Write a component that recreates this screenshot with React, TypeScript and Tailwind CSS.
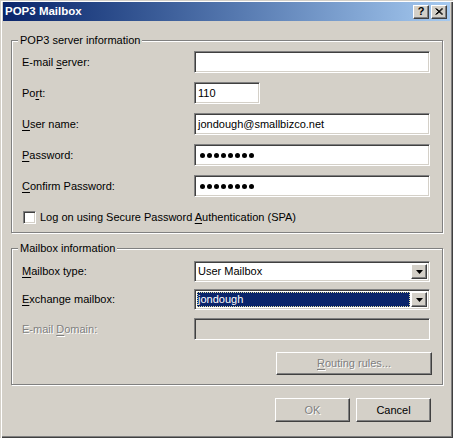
import React from "react";

const sunken =
  "border border-t-[#808080] border-l-[#808080] border-r-white border-b-white shadow-[inset_1px_1px_0_#404040,inset_-1px_-1px_0_#d4d0c8]";
const raised =
  "border border-t-white border-l-white border-r-[#404040] border-b-[#404040] shadow-[inset_-1px_-1px_0_#808080,inset_1px_1px_0_#d4d0c8]";
const disabledText = "text-[#808080] [text-shadow:1px_1px_0_#fff]";

function U({ children }: { children: React.ReactNode }) {
  return <span className="underline decoration-1 underline-offset-[2px]">{children}</span>;
}

function Dots() {
  return (
    <div className="flex items-center gap-[2px] pl-[5px]">
      {Array.from({ length: 8 }).map((_, i) => (
        <div key={i} className="w-[5px] h-[5px] rounded-full bg-black" />
      ))}
    </div>
  );
}

function Row({
  label,
  children,
  mt,
}: {
  label: React.ReactNode;
  children: React.ReactNode;
  mt: string;
}) {
  return (
    <div className={`flex items-center ${mt}`}>
      <div className="w-[182px] pl-[10px]">{label}</div>
      {children}
    </div>
  );
}

function Arrow() {
  return (
    <div className={`w-[16px] h-full flex items-center justify-center bg-[#d4d0c8] ${raised}`}>
      <svg width="7" height="4" viewBox="0 0 7 4">
        <path d="M0 0H7L3.5 4Z" fill="#000" />
      </svg>
    </div>
  );
}

export default function App() {
  return (
    <div className="w-[453px] h-[438px] bg-[#d4d0c8] flex flex-col px-[3px] pt-[2px] pb-[3px] text-[11px] leading-[13px] text-black [font-family:'Liberation_Sans',Arial,sans-serif] shadow-[inset_1px_1px_0_#d4d0c8,inset_2px_2px_0_#fff,inset_-1px_-1px_0_#404040,inset_-2px_-2px_0_#808080]">
      {/* Title bar */}
      <div className="h-[19px] flex items-center bg-gradient-to-r from-[#0a246a] to-[#a6caf0] pl-[2px] pr-[3px]">
        <div className="flex-1 text-white font-bold text-[11.5px]">POP3 Mailbox</div>
        <div className={`w-[16px] h-[14px] bg-[#d4d0c8] flex items-center justify-center ${raised}`}>
          <span className="font-bold text-[11px] leading-[11px] text-black">?</span>
        </div>
        <div className={`ml-[2px] w-[16px] h-[14px] bg-[#d4d0c8] flex items-center justify-center ${raised}`}>
          <svg width="8" height="7" viewBox="0 0 8 7">
            <path d="M0.5 0.5L7 6.5M1.5 0.5L8 6.5M7 0.5L0.5 6.5M8 0.5L1.5 6.5" stroke="#000" strokeWidth="1" />
          </svg>
        </div>
      </div>

      {/* Group 1 */}
      <div className="relative ml-[8px] mt-[19px] w-[432px] h-[193px] border border-[#808080] shadow-[inset_1px_1px_0_#fff,1px_1px_0_#fff] pt-[10px]">
        <div className="absolute -top-[7px] left-[6px] px-[2px] bg-[#d4d0c8]">POP3 server information</div>
        <Row mt="" label={<>E-mail <U>s</U>erver:</>}>
          <div className={`w-[236px] h-[22px] bg-white ${sunken}`} />
        </Row>
        <Row mt="mt-[9px]" label={<>Po<U>r</U>t:</>}>
          <div className={`w-[66px] h-[22px] bg-white flex items-center pl-[3px] ${sunken}`}>110</div>
        </Row>
        <Row mt="mt-[9px]" label={<><U>U</U>ser name:</>}>
          <div className={`w-[236px] h-[22px] bg-white flex items-center pl-[3px] ${sunken}`}>jondough@smallbizco.net</div>
        </Row>
        <Row mt="mt-[9px]" label={<><U>P</U>assword:</>}>
          <div className={`w-[236px] h-[22px] bg-white flex items-center ${sunken}`}>
            <Dots />
          </div>
        </Row>
        <Row mt="mt-[9px]" label={<><U>C</U>onfirm Password:</>}>
          <div className={`w-[236px] h-[22px] bg-white flex items-center ${sunken}`}>
            <Dots />
          </div>
        </Row>
        <div className="flex items-center mt-[14px] pl-[11px]">
          <div className={`w-[13px] h-[13px] bg-white ${sunken}`} />
          <div className="ml-[4px]">Log on using Secure Password <U>A</U>uthentication (SPA)</div>
        </div>
      </div>

      {/* Group 2 */}
      <div className="relative ml-[8px] mt-[15px] w-[432px] h-[137px] border border-[#808080] shadow-[inset_1px_1px_0_#fff,1px_1px_0_#fff] pt-[12px]">
        <div className="absolute -top-[7px] left-[6px] px-[2px] bg-[#d4d0c8]">Mailbox information</div>
        <Row mt="" label={<><U>M</U>ailbox type:</>}>
          <div className={`w-[236px] h-[21px] bg-white flex items-center p-[2px] ${sunken}`}>
            <div className="flex-1 pl-[1px]">User Mailbox</div>
            <Arrow />
          </div>
        </Row>
        <Row mt="mt-[7px]" label={<><U>E</U>xchange mailbox:</>}>
          <div className={`w-[236px] h-[21px] bg-white flex items-center p-[2px] ${sunken}`}>
            <div className="flex-1 h-full mr-[1px] bg-[#0a246a] text-white flex items-center pl-[1px] outline-1 outline-dotted outline-[#e0dca0] -outline-offset-1">
              jondough
            </div>
            <Arrow />
          </div>
        </Row>
        <Row mt="mt-[8px]" label={<span className={disabledText}>E-mail <U>D</U>omain:</span>}>
          <div className={`w-[236px] h-[22px] bg-[#d4d0c8] ${sunken}`} />
        </Row>
        <div className="flex justify-end mt-[12px] pr-[10px]">
          <div className={`w-[156px] h-[23px] bg-[#d4d0c8] flex items-center justify-center ${raised} ${disabledText}`}>
            <span><U>R</U>outing rules...</span>
          </div>
        </div>
      </div>

      {/* Buttons */}
      <div className="flex justify-end mt-[13px] pr-[19px] gap-[6px]">
        <div className={`w-[75px] h-[24px] bg-[#d4d0c8] flex items-center justify-center ${raised} ${disabledText}`}>OK</div>
        <div className={`w-[75px] h-[24px] bg-[#d4d0c8] flex items-center justify-center ${raised}`}>Cancel</div>
      </div>
    </div>
  );
}
